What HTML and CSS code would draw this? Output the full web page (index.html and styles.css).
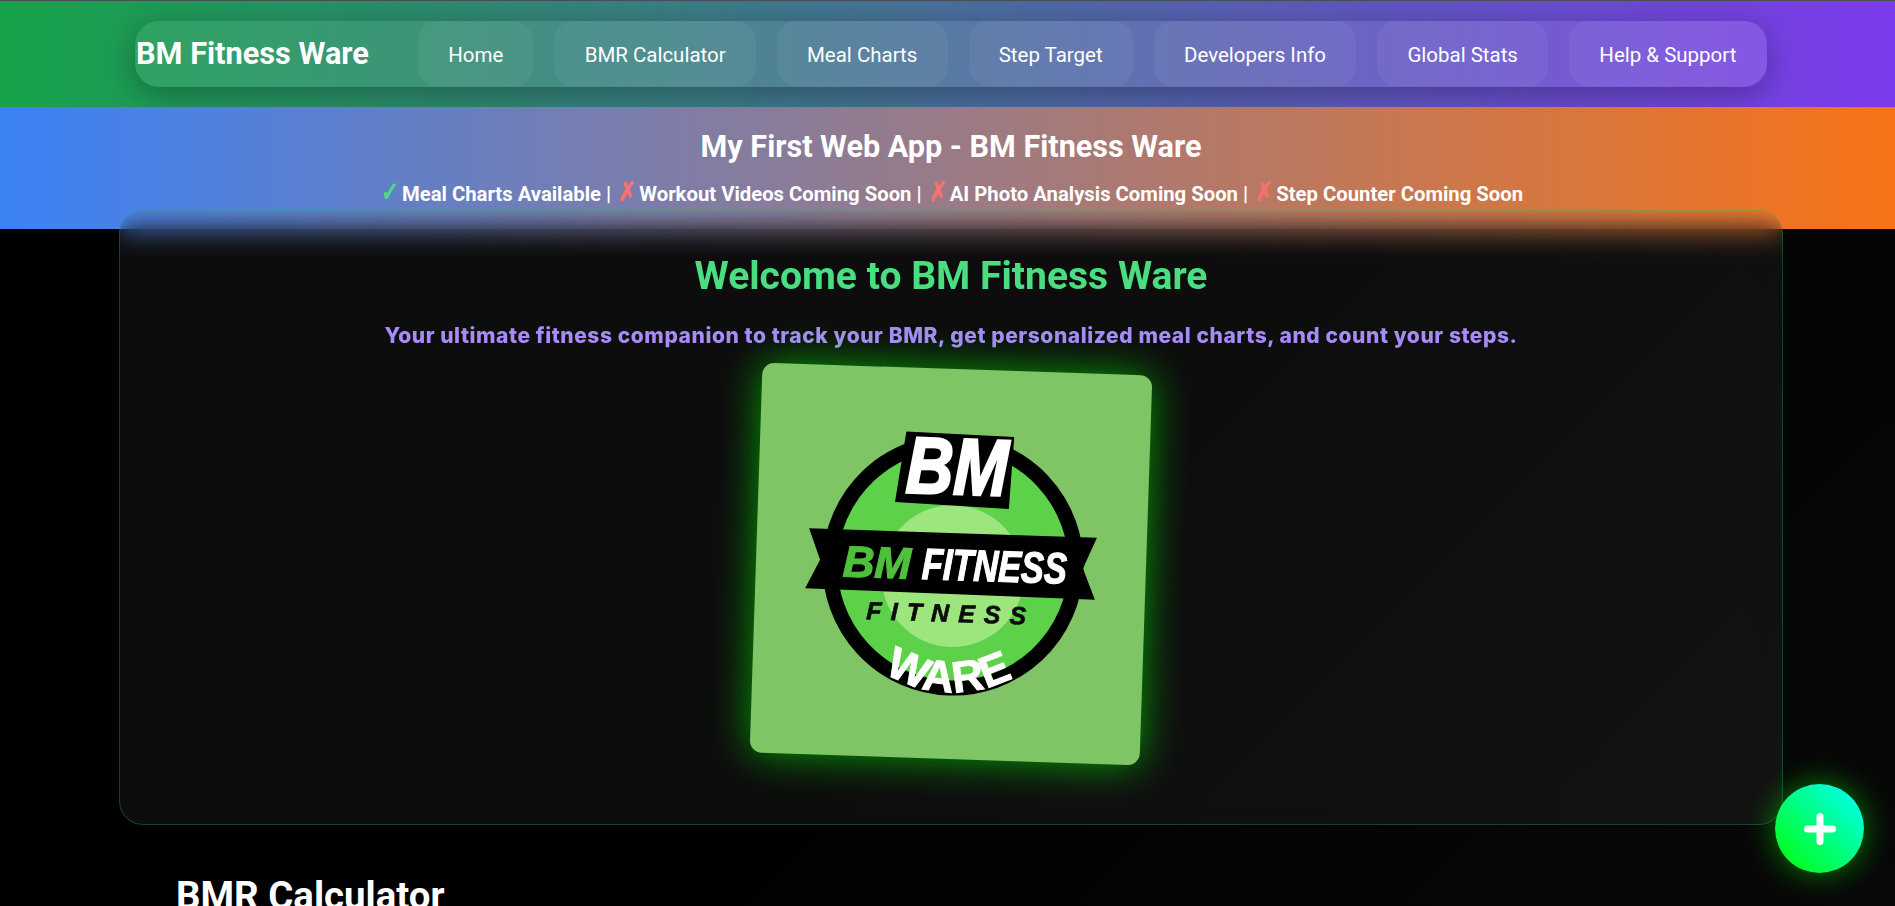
FILE: index.html
```html
<!DOCTYPE html>
<html lang="en">
<head>
    <meta charset="UTF-8">
    <meta name="viewport" content="width=device-width, initial-scale=1.0">
    <title>BM Fitness Ware</title>
    <link rel="stylesheet" href="styles.css">
</head>
<body>
    <div class="page">
        <header class="header">
            <nav class="nav">
                <div class="brand">BM Fitness Ware</div>
                <a href="#" class="nav-link">Home</a>
                <a href="#" class="nav-link">BMR Calculator</a>
                <a href="#" class="nav-link">Meal Charts</a>
                <a href="#" class="nav-link">Step Target</a>
                <a href="#" class="nav-link">Developers Info</a>
                <a href="#" class="nav-link">Global Stats</a>
                <a href="#" class="nav-link">Help &amp; Support</a>
            </nav>
        </header>

        <div class="banner">
            <h2>My First Web App - BM Fitness Ware</h2>
            <p><span class="ok">✓</span> Meal Charts Available | <span class="no">✗</span> Workout Videos Coming Soon | <span class="no">✗</span> AI Photo Analysis Coming Soon | <span class="no">✗</span> Step Counter Coming Soon</p>
        </div>

        <section class="hero">
            <h1>Welcome to BM Fitness Ware</h1>
            <p class="tagline">Your ultimate fitness companion to track your BMR, get personalized meal charts, and count your steps.</p>
            <div class="logo-card">
                <svg class="logo" viewBox="0 0 390 390" role="img" aria-label="BM Fitness Ware logo">
                    <defs>
                        <path id="ware-arc" d="M67 193 A130 130 0 0 0 327 193"/>
                    </defs>
                    <circle cx="197" cy="196" r="123" fill="#5ed14a" stroke="#000" stroke-width="15"/>
                    <circle cx="197" cy="207" r="71" fill="#9de57d"/>
                    <polygon points="52,164 340,164 327,195 340,226 50,224 64,195" fill="#000"/>
                    <polygon points="146,64 254,66 251,138 137,135" fill="#000"/>
                    <text class="logo-bm" x="147" y="125" textLength="102" lengthAdjust="spacingAndGlyphs">BM</text>
                    <text class="logo-mid logo-green" x="87" y="211" textLength="68" lengthAdjust="spacingAndGlyphs">BM</text>
                    <text class="logo-mid logo-white" x="166" y="211" textLength="145" lengthAdjust="spacingAndGlyphs">FITNESS</text>
                    <text class="logo-small" x="112" y="253" textLength="160" lengthAdjust="spacing">FITNESS</text>
                    <text class="logo-ware">
                        <textPath href="#ware-arc" startOffset="50%" text-anchor="middle">WARE</textPath>
                    </text>
                </svg>
            </div>
        </section>

        <section class="calc">
            <h2>BMR Calculator</h2>
        </section>
    </div>

    <button class="fab" aria-label="Open menu">
        <svg viewBox="0 0 32 32" width="32" height="32">
            <path d="M16 3.5V28.5M3.5 16H28.5" stroke="#fff" stroke-width="7" stroke-linecap="round"/>
        </svg>
    </button>
</body>
</html>
```

FILE: styles.css
```css
html, body {
    margin: 0;
    height: 100%;
    overflow: hidden;
}
body {
    font-family: Roboto, "Liberation Sans", sans-serif;
    background: linear-gradient(135deg, #000 0%, #000 50%, #080808 100%);
    color: white;
}
.page {
    width: 1902px;
}
.header {
    border-top: 1px solid #4a4f55;
    background: linear-gradient(90deg, #16a34a 0%, #7c3aed 100%);
    padding-top: 20px;
    box-sizing: border-box;
    height: 107px;
}
.nav {
    width: 1632px;
    height: 66px;
    margin: 0 auto;
    box-sizing: border-box;
    display: flex;
    align-items: stretch;
    gap: 21px;
    background: rgba(255,255,255,0.08);
    border-radius: 24px;
    box-shadow: 0 8px 32px rgba(0,0,0,0.3);
}
.brand {
    flex: 0 0 262px;
    padding-left: 1px;
    box-sizing: border-box;
    font-size: 30.72px;
    font-weight: 700;
    line-height: 66px;
    white-space: nowrap;
}
.nav-link {
    display: flex;
    align-items: center;
    justify-content: center;
    flex: 0 0 auto;
    padding: 1px 30.2px 0 30.2px;
    font-size: 20.48px;
    color: white;
    text-decoration: none;
    background: rgba(255,255,255,0.05);
    border-radius: 20px;
}
.banner {
    height: 122px;
    box-sizing: border-box;
    padding-top: 21px;
    text-align: center;
    background: linear-gradient(90deg, #3b82f6 0%, #f97316 100%);
}
.banner h2 {
    margin: 0;
    font-size: 30.6px;
    line-height: 38px;
    font-weight: 700;
}
.banner p {
    margin: 13px 0 0 0;
    font-size: 20.3px;
    line-height: 26px;
    font-weight: 700;
}
.ok, .no {
    display: inline-block;
    width: 18px;
    font-size: 27px;
    line-height: 1;
    text-align: center;
    transform: scaleX(0.8);
}
.ok { color: #4ade80; }
.no { color: #f87171; }
.hero {
    width: 1664px;
    height: 615px;
    box-sizing: border-box;
    margin: -19px auto 0 auto;
    padding-top: 41px;
    text-align: center;
    background: rgba(255,255,255,0.05);
    border: 1px solid rgba(34,197,94,0.3);
    border-radius: 24px;
    backdrop-filter: blur(14px);
}
.hero h1 {
    margin: 0;
    font-size: 39.1px;
    line-height: 48px;
    font-weight: 700;
    color: #4ade80;
}
.tagline {
    margin: 23px 0 0 0;
    font-family: Inter, sans-serif;
    font-size: 21px;
    line-height: 26px;
    font-weight: 800;
    letter-spacing: 0.57px;
    color: #a78bfa;
}
.logo-card {
    width: 390px;
    height: 390px;
    margin: 20px auto 0 auto;
    background: #80c565;
    border-radius: 12px;
    box-shadow: 0 0 40px rgba(0,255,0,0.6);
    transform: rotate(1.9deg);
}
.logo {
    display: block;
    width: 390px;
    height: 390px;
}
.logo text {
    font-family: "Liberation Sans", sans-serif;
    font-weight: 700;
}
.logo-bm {
    font-size: 80px;
    font-style: italic;
    fill: #fff;
    stroke: #fff;
    stroke-width: 2.5px;
}
.logo-mid {
    font-size: 44px;
    font-style: italic;
    stroke-width: 1.2px;
}
.logo-green { fill: #4fc03c; stroke: #4fc03c; }
.logo-white { fill: #fff; stroke: #fff; }
.logo-small {
    font-size: 25px;
    font-style: italic;
    fill: #0c0c0c;
    stroke: #0c0c0c;
    stroke-width: 0.6px;
}
.logo-ware {
    font-size: 44px;
    letter-spacing: 1px;
    fill: #fff;
    stroke: #fff;
    stroke-width: 1px;
}
.calc {
    padding: 48px 0 0 176px;
}
.calc h2 {
    margin: 0;
    font-size: 38.4px;
    line-height: 46px;
    font-weight: 700;
}
.fab {
    position: fixed;
    right: 31px;
    bottom: 33px;
    width: 89px;
    height: 89px;
    padding: 0;
    border: none;
    border-radius: 50%;
    display: flex;
    align-items: center;
    justify-content: center;
    background: linear-gradient(45deg, #00ff00, #00ffff);
    box-shadow: 0 0 30px rgba(0,255,0,0.5);
}
```
